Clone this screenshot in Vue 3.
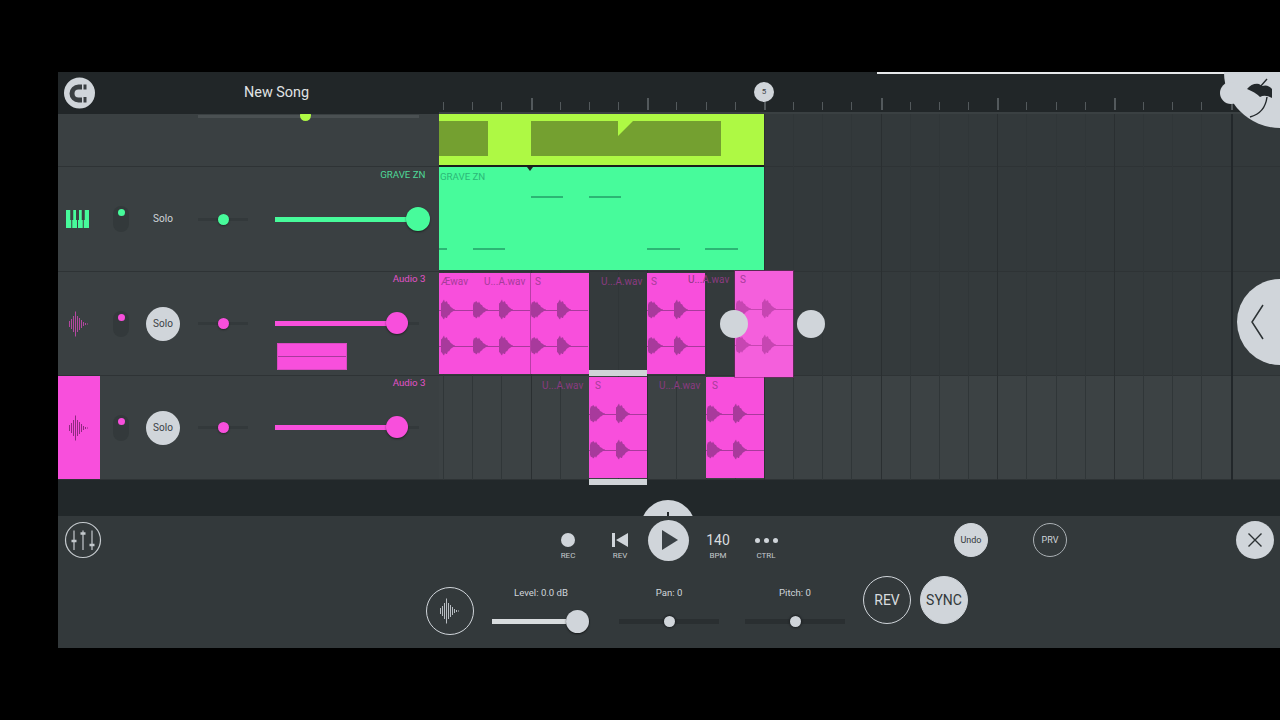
<script setup>
const BEAT = 29.17
const beats = Array.from({ length: 28 }, (_, n) => ({
  x: 4 + n * BEAT,
  bar: n % 4 === 3,
  edge: n === 27,
}))

function blob(x0, w, h, y, seed) {
  const top = []
  const bottom = []
  for (let i = 0; i <= w; i++) {
    const t = i / w
    let env
    if (t < 0.12) env = 0.55 + (t / 0.12) * 0.45
    else if (t < 0.45) env = 1 - (t - 0.12) * 0.6
    else env = 0.8 * Math.pow(1 - (t - 0.45) / 0.55, 1.7)
    const jitter = 0.86 + 0.14 * Math.sin(i * 2.3 + seed)
    const a = h * env * jitter + 0.6
    top.push(`${x0 + i} ${(y - a).toFixed(1)}`)
    bottom.unshift(`${x0 + i} ${(y + a * 0.92).toFixed(1)}`)
  }
  return `M${top.join(' L')} L${bottom.join(' L')}Z`
}
const tilePath = [37, 73]
  .map((y) => blob(1, 15, 9.5, y, 0) + blob(27, 14, 10.5, y, 1.4))
  .join('')

const iconBars = [[0, 3], [2, 5], [4, 8], [6, 12.5], [8, 8], [10, 6], [12, 4], [14, 2], [16, 1], [18, 0.5]]
const iconPath = iconBars.map(([x, h]) => `M${x + 1.5} ${18 - h}V${18 + h}`).join('')

const rows = [
  { id: 'g', h: 105, color: '#47fb9b', labelColor: '#4fd898', name: 'GRAVE ZN', icon: 'piano', solo: false, level: 143, labelTop: 2 },
  { id: 'p1', h: 104, color: '#f84fdc', labelColor: '#e252c8', name: 'Audio 3', icon: 'wave', solo: true, level: 122, labelTop: 1, ghost: true },
  { id: 'p2', h: 104, color: '#f84fdc', labelColor: '#e252c8', name: 'Audio 3', icon: 'wave', solo: true, level: 122, labelTop: 1, block: true },
]

const clips = [
  { x: 0, y: 159, w: 150, h: 101, tiles: [-25, 33, 91], divider: 91 },
  { x: 208, y: 159, w: 58, h: 101, tiles: [0] },
  { x: 150, y: 263, w: 58, h: 101, tiles: [0], selected: true },
  { x: 267, y: 263, w: 58, h: 101, tiles: [0] },
  { x: 296, y: 157, w: 58, h: 106, tiles: [0], ghost: true },
]

const labels = [
  { t: 'Æwav', x: 2, y: 168, on: true },
  { t: 'U...A.wav', x: 45, y: 168, on: true },
  { t: 'S', x: 96, y: 168, on: true },
  { t: 'U...A.wav', x: 162, y: 168 },
  { t: 'S', x: 212, y: 168, on: true },
  { t: 'U...A.wav', x: 249, y: 166 },
  { t: 'S', x: 301, y: 166, on: true },
  { t: 'U...A.wav', x: 103, y: 272 },
  { t: 'S', x: 156, y: 272, on: true },
  { t: 'U...A.wav', x: 220, y: 272 },
  { t: 'S', x: 273, y: 272, on: true },
]

const notes = [
  [92, 83, 32], [150, 83, 32], [0, 135, 8], [34, 135, 32], [208, 135, 33], [266, 135, 33],
]

const transport = [
  { id: 'rec', label: 'REC' },
  { id: 'rev', label: 'REV' },
  { id: 'play', label: '' },
  { id: 'bpm', label: 'BPM' },
  { id: 'ctrl', label: 'CTRL' },
]

const sliders = [
  { label: 'Level: 0.0 dB', w: 98, knob: 85, big: true, gap: 18 },
  { label: 'Pan: 0', w: 100, knob: 50, gap: 29 },
  { label: 'Pitch: 0', w: 100, knob: 50, gap: 26 },
]
</script>

<template>
  <div class="page">
    <div class="app">
      <header class="header">
        <div class="head-left">
          <svg class="snap" width="32" height="32" viewBox="0 0 32 32">
            <circle cx="15.5" cy="16" r="15.5" fill="#d0d5da" />
            <path d="M18 10H14.5a6.5 6.5 0 0 0 0 13H18" fill="none" stroke="#3a3f42" stroke-width="5" />
            <path d="M19.5 7.5H22.5V12.5H19.5ZM19.5 20H22.5V25.5H19.5Z" fill="#3a3f42" />
          </svg>
          <span class="song">New Song</span>
        </div>
        <div class="ruler">
          <i
            v-for="b in beats"
            :key="b.x"
            class="tick"
            :class="{ bar: b.bar }"
            :style="{ left: b.x + 'px' }"
          />
          <b class="marker">5</b>
          <span class="topline" />
        </div>
      </header>

      <div class="body">
        <div class="tracks">
          <div class="row first">
            <div class="scrub"><span class="scrub-knob" /></div>
          </div>
          <div v-for="r in rows" :key="r.id" class="row" :style="{ height: r.h + 'px' }">
            <span class="track-name" :style="{ color: r.labelColor, top: r.labelTop + 'px' }">{{ r.name }}</span>
            <div class="icon-cell" :style="r.block ? { background: r.color } : null">
              <svg v-if="r.icon === 'piano'" class="piano" width="23" height="18" viewBox="0 0 23 18">
                <rect x="0" y="0" width="23" height="18" :fill="r.color" />
                <path d="M5.75 0V18M11.5 0V18M17.25 0V18" stroke="#3a4042" stroke-width="1" />
                <path d="M5.75 0V10M11.5 0V10M17.25 0V10" stroke="#3a4042" stroke-width="3" />
              </svg>
              <svg v-else width="22" height="36" viewBox="0 0 22 36">
                <path :d="iconPath" fill="none" :stroke="r.block ? '#8f2a80' : '#b3479f'" stroke-width="1" />
              </svg>
            </div>
            <div class="toggle"><span :style="{ background: r.color }" /></div>
            <div class="solo" :class="{ on: r.solo }">Solo</div>
            <div class="pan"><span :style="{ background: r.color }" /></div>
            <div class="volume">
              <span class="vol-fill" :style="{ width: r.level + 'px', background: r.color }" />
              <span class="vol-knob" :class="{ large: r.id === 'g' }" :style="{ left: r.level + 'px', background: r.color }" />
            </div>
            <div v-if="r.ghost" class="drag-ghost" />
          </div>
        </div>

        <div class="timeline">
          <div class="lane lane-a" />
          <div class="lane lane-a tall" />
          <div class="lane lane-b" />
          <div class="lane lane-c" />
          <i
            v-for="b in beats"
            :key="b.x"
            class="grid"
            :class="{ bar: b.bar, edge: b.edge }"
            :style="{ left: b.x + 'px' }"
          />

          <div class="lime">
            <div class="lime-block" />
            <svg class="lime-notch" width="190" height="35" viewBox="0 0 190 35">
              <path d="M0 0H87V15L102 0H190V35H0Z" fill="#74a030" />
            </svg>
          </div>
          <div class="green">
            <span class="green-name">GRAVE ZN</span>
            <i class="playhead" />
            <i
              v-for="n in notes"
              :key="n[0] + '-' + n[1]"
              class="note"
              :style="{ left: n[0] + 'px', top: n[1] - 53 + 'px', width: n[2] + 'px' }"
            />
          </div>

          <template v-for="(c, i) in clips" :key="i">
            <div
              class="clip"
              :class="{ ghost: c.ghost }"
              :style="{ left: c.x + 'px', top: c.y + 'px', width: c.w + 'px', height: c.h + 'px' }"
            >
              <svg
                v-for="t in c.tiles"
                :key="t"
                class="tile"
                :style="{ left: t + 'px', top: (c.ghost ? 1 : 0) + 'px' }"
                width="58"
                height="100"
                viewBox="0 0 58 100"
              >
                <path :d="tilePath" :fill="c.ghost ? '#c646b2' : '#a83a9c'" />
                <path d="M0 37.5H58M0 73.5H58" :stroke="c.ghost ? '#c646b2' : '#a83a9c'" stroke-width="1" />
              </svg>
              <i v-if="c.divider" class="divider" :style="{ left: c.divider + 'px' }" />
            </div>
            <template v-if="c.selected">
              <i class="sel-bar" :style="{ left: c.x + 'px', top: c.y - 7 + 'px' }" />
              <i class="sel-bar" :style="{ left: c.x + 'px', top: c.y + c.h + 1 + 'px' }" />
            </template>
          </template>

          <span
            v-for="(l, i) in labels"
            :key="'l' + i"
            class="clip-label"
            :class="{ on: l.on }"
            :style="{ left: l.x + 'px', top: l.y - 6 + 'px' }"
          >{{ l.t }}</span>

          <i class="handle" style="left: 281px; top: 196px" />
          <i class="handle" style="left: 358px; top: 196px" />
        </div>
      </div>

      <div class="gap"><span class="arc"><i /></span></div>

      <div class="panel">
        <div class="panel-top">
          <svg class="mixer" width="38" height="38" viewBox="0 0 38 38" fill="none" stroke="#c4c9cd">
            <circle cx="19" cy="19" r="17.5" stroke-width="1.2" />
            <path d="M10 9.5V29M19 9.5V29M28 9.5V29" stroke-width="1.2" />
            <path d="M7.5 20H12.5M16.5 12.5H21.5M25.5 24H30.5" stroke-width="2.6" />
          </svg>
          <div class="transport">
            <div v-for="t in transport" :key="t.id" class="t-item">
              <div class="t-icon">
                <span v-if="t.id === 'rec'" class="rec-dot" />
                <svg v-else-if="t.id === 'rev'" width="18" height="16" viewBox="0 0 18 16">
                  <path d="M1 1H4V15H1ZM17 1V15L5 8Z" fill="#d0d5da" />
                </svg>
                <div v-else-if="t.id === 'play'" class="play">
                  <svg width="16" height="20" viewBox="0 0 16 20">
                    <path d="M0 0L16 10L0 20Z" fill="#3a4145" />
                  </svg>
                </div>
                <span v-else-if="t.id === 'bpm'" class="bpm">140</span>
                <span v-else class="dots"><i /><i /><i /></span>
              </div>
              <span class="t-label">{{ t.label }}</span>
            </div>
          </div>
          <button class="round undo">Undo</button>
          <button class="round prv">PRV</button>
          <button class="close" aria-label="Close">
            <svg width="16" height="16" viewBox="0 0 16 16">
              <path d="M1.5 1.5L14.5 14.5M14.5 1.5L1.5 14.5" stroke="#2c3234" stroke-width="1.4" />
            </svg>
          </button>
        </div>

        <div class="panel-bottom">
          <div class="wave-btn">
            <svg width="22" height="36" viewBox="0 0 22 36">
              <path :d="iconPath" fill="none" stroke="#b8bdc2" stroke-width="1" />
            </svg>
          </div>
          <div
            v-for="s in sliders"
            :key="s.label"
            class="param"
            :style="{ width: s.w + 'px', marginLeft: s.gap + 'px' }"
          >
            <span class="param-label">{{ s.label }}</span>
            <div class="param-track">
              <span v-if="s.big" class="param-fill" :style="{ width: s.knob - 11 + 'px' }" />
              <span class="param-knob" :class="{ big: s.big }" :style="{ left: s.knob + 'px' }" />
            </div>
          </div>
          <div class="big-round rev">REV</div>
          <div class="big-round sync">SYNC</div>
        </div>
      </div>

      <div class="arrow">
        <svg width="14" height="36" viewBox="0 0 14 36">
          <path d="M12 1L1 18L12 35" fill="none" stroke="#2c3234" stroke-width="1.5" />
        </svg>
      </div>
      <svg class="fruit" width="62" height="58" viewBox="0 0 62 58">
        <circle cx="62" cy="0" r="56" fill="#d0d5da" />
        <circle cx="13" cy="21" r="11" fill="#d0d5da" />
        <path
          d="M29 17Q34 11 41 12L44 14Q50 12 54 17V26Q47 22 42 25Q37 20 29 17Z"
          fill="#23282b"
        />
        <path d="M49 7L42 15" stroke="#23282b" stroke-width="1.4" fill="none" />
        <path d="M49 25Q47 41 32 45" stroke="#23282b" stroke-width="1.4" fill="none" />
      </svg>
    </div>
  </div>
</template>

<style scoped>
.page {
  width: 1280px;
  height: 720px;
  box-sizing: border-box;
  padding: 72px 0 72px 58px;
  background: #000;
  overflow: hidden;
  font-family: Roboto, "Liberation Sans", sans-serif;
}
.app {
  position: relative;
  height: 576px;
  display: flex;
  flex-direction: column;
  overflow: hidden;
}

/* header */
.header {
  height: 42px;
  flex: none;
  display: flex;
  background: #212628;
}
.head-left {
  width: 381px;
  flex: none;
  display: flex;
  align-items: center;
  padding: 0 0 1px 6px;
  box-sizing: border-box;
}
.snap { flex: none; }
.song {
  margin-left: 148px;
  font-size: 14.4px;
  color: #e0e3e5;
}
.ruler {
  position: relative;
  flex: 1;
  border-bottom: 2px solid #3a4042;
  box-sizing: border-box;
}
.tick {
  position: absolute;
  top: 30px;
  width: 1px;
  height: 8px;
  background: #53595c;
}
.tick.bar {
  width: 2px;
  height: 12px;
  top: 26px;
}
.marker {
  position: absolute;
  left: 315px;
  top: 10px;
  width: 20px;
  height: 20px;
  border-radius: 50%;
  background: #d0d5da;
  color: #3a4145;
  font-size: 8px;
  font-weight: 400;
  line-height: 20px;
  text-align: center;
}
.topline {
  position: absolute;
  left: 438px;
  top: 0;
  width: 350px;
  height: 2px;
  background: #e6e8ea;
}

/* track list */
.body {
  height: 366px;
  flex: none;
  display: flex;
}
.tracks {
  width: 381px;
  flex: none;
  background: #3a4042;
}
.row {
  position: relative;
  display: flex;
  align-items: center;
  box-sizing: border-box;
  border-bottom: 1px solid #2e3335;
}
.row.first {
  height: 53px;
  align-items: flex-start;
  overflow: hidden;
}
.scrub {
  position: relative;
  margin-left: 140px;
  width: 221px;
  height: 3px;
  margin-top: 1px;
  background: #4a5052;
}
.scrub-knob {
  position: absolute;
  left: 102px;
  top: -5px;
  width: 11px;
  height: 11px;
  border-radius: 50%;
  background: #aef944;
}
.track-name {
  position: absolute;
  right: 13.5px;
  font-size: 9.7px;
  line-height: 12px;
}
.icon-cell {
  width: 42px;
  height: 100%;
  flex: none;
  display: flex;
  align-items: center;
  justify-content: center;
}
.piano { margin-left: -3px; }
.toggle {
  width: 16px;
  height: 26px;
  margin-left: 13px;
  flex: none;
  border-radius: 8px;
  background: #33393b;
  display: flex;
  justify-content: center;
  padding-top: 3px;
  box-sizing: border-box;
}
.toggle span {
  width: 7px;
  height: 7px;
  border-radius: 50%;
}
.solo {
  width: 34px;
  height: 34px;
  margin-left: 17px;
  flex: none;
  border-radius: 50%;
  color: #d0d5da;
  font-size: 10px;
  line-height: 34px;
  text-align: center;
}
.solo.on {
  background: #d0d5da;
  color: #3a4145;
}
.pan {
  position: relative;
  width: 50px;
  height: 3px;
  margin-left: 18px;
  flex: none;
  background: #33393b;
}
.pan span {
  position: absolute;
  left: 20px;
  top: -4px;
  width: 11px;
  height: 11px;
  border-radius: 50%;
  box-shadow: 0 1px 2px rgba(0, 0, 0, 0.4);
}
.volume {
  position: relative;
  width: 144px;
  height: 5px;
  margin-left: 27px;
  flex: none;
  background: linear-gradient(#33393b, #33393b) no-repeat 0 1px / 100% 3px;
}
.vol-fill {
  position: absolute;
  left: 0;
  top: 0;
  height: 5px;
}
.vol-knob {
  position: absolute;
  top: -9px;
  width: 22px;
  height: 22px;
  margin-left: -11px;
  border-radius: 50%;
  box-shadow: 0 1px 2px rgba(0, 0, 0, 0.5);
}
.vol-knob.large {
  top: -10px;
  width: 24px;
  height: 24px;
  margin-left: -12px;
}
.drag-ghost {
  position: absolute;
  left: 219px;
  top: 71px;
  width: 70px;
  height: 27px;
  box-sizing: border-box;
  background: linear-gradient(#f84fdc 12px, #a83a9c 12px, #a83a9c 13px, #f84fdc 13px);
  border: 1px solid #d94ac2;
}

/* timeline */
.timeline {
  position: relative;
  z-index: 1;
  flex: 1;
}
.lane {
  box-sizing: border-box;
  border-bottom: 1px solid #2e3335;
}
.lane-a { height: 53px; background: #33393b; }
.lane-a.tall { height: 105px; }
.lane-b { height: 104px; background: #343a3c; }
.lane-c { height: 104px; background: #3c4244; }
.grid {
  position: absolute;
  top: 0;
  height: 366px;
  width: 1px;
  background: #303638;
}
.grid.bar { background: #2a2f31; }
.grid.edge { background: #22272a; width: 2px; }
.lime {
  position: absolute;
  left: 0;
  top: 0;
  width: 325px;
  height: 51px;
  background: #aef944;
  border-bottom: 2px solid #1a1d1c;
}
.lime-block {
  position: absolute;
  left: 0;
  top: 7px;
  width: 49px;
  height: 35px;
  background: #74a030;
}
.lime-notch {
  position: absolute;
  left: 92px;
  top: 7px;
}
.green {
  position: absolute;
  left: 0;
  top: 53px;
  width: 325px;
  height: 103px;
  background: #47fb9b;
}
.green-name {
  position: absolute;
  left: 1px;
  top: 4px;
  font-size: 9.7px;
  line-height: 12px;
  color: #2bb878;
}
.playhead {
  position: absolute;
  left: 88px;
  top: 0;
  width: 0;
  height: 0;
  border: 3px solid transparent;
  border-top: 4px solid #1f2423;
}
.note {
  position: absolute;
  height: 2px;
  margin-top: -1px;
  background: #2cb574;
}
.clip {
  position: absolute;
  overflow: hidden;
  background: #f84fdc;
}
.clip.ghost {
  background: #f45fdc;
  box-shadow: 0 0 0 1px rgba(130, 30, 110, 0.5);
}
.tile {
  position: absolute;
}
.divider {
  position: absolute;
  top: 0;
  bottom: 0;
  width: 1px;
  background: #b83ea6;
}
.sel-bar {
  position: absolute;
  width: 58px;
  height: 6px;
  background: #d0d4d8;
}
.clip-label {
  position: absolute;
  font-size: 10px;
  line-height: 12px;
  color: #8a3a80;
  white-space: nowrap;
}
.clip-label.on {
  color: #a63c9a;
}
.handle {
  position: absolute;
  width: 28px;
  height: 28px;
  border-radius: 50%;
  background: #d0d5da;
}

/* middle strip */
.gap {
  position: relative;
  height: 36px;
  flex: none;
  background: #22282a;
  overflow: hidden;
}
.arc {
  position: absolute;
  left: 583px;
  top: 20px;
  width: 54px;
  height: 54px;
  border-radius: 50%;
  background: #d0d5da;
}
.arc i {
  position: absolute;
  left: 26px;
  top: 12px;
  width: 2px;
  height: 5px;
  background: #23282b;
}

/* bottom panel */
.panel {
  height: 132px;
  flex: none;
  background: #33393b;
}
.panel-top {
  height: 48px;
  display: flex;
  align-items: center;
}
.mixer {
  margin-left: 6px;
  flex: none;
}
.transport {
  margin-left: 440px;
  height: 48px;
  flex: none;
  display: grid;
  grid-template-columns: 52px 52px 44px 56px 40px;
}
.t-item {
  display: flex;
  flex-direction: column;
  align-items: center;
  padding-top: 14px;
  box-sizing: border-box;
}
.t-icon {
  height: 20px;
  display: flex;
  align-items: center;
  justify-content: center;
}
.t-label {
  margin-top: 1px;
  font-size: 8px;
  line-height: 10px;
  color: #c4c9cd;
}
.rec-dot {
  width: 14px;
  height: 14px;
  border-radius: 50%;
  background: #d0d5da;
}
.play {
  width: 41px;
  height: 41px;
  flex: none;
  border-radius: 50%;
  background: #d0d5da;
  display: flex;
  align-items: center;
  justify-content: center;
  padding-left: 3px;
  box-sizing: border-box;
}
.bpm {
  font-size: 14px;
  color: #d8dcdf;
}
.dots {
  display: flex;
  gap: 4px;
}
.dots i {
  width: 5px;
  height: 5px;
  border-radius: 50%;
  background: #d0d5da;
}
.round {
  width: 34px;
  height: 34px;
  padding: 0;
  flex: none;
  border-radius: 50%;
  font: 9px Roboto, "Liberation Sans", sans-serif;
  line-height: 32px;
  text-align: center;
}
.undo {
  margin-left: 168px;
  background: #d0d5da;
  border: 1px solid #d0d5da;
  color: #33393b;
}
.prv {
  margin-left: 45px;
  background: transparent;
  border: 1px solid #aab0b4;
  color: #d0d5da;
}
.close {
  margin-left: 169px;
  width: 38px;
  height: 38px;
  padding: 0;
  flex: none;
  border: 0;
  border-radius: 50%;
  background: #d0d5da;
  display: flex;
  align-items: center;
  justify-content: center;
}
.panel-bottom {
  display: flex;
  align-items: flex-start;
}
.wave-btn {
  width: 48px;
  height: 48px;
  margin: 23px 0 0 368px;
  flex: none;
  box-sizing: border-box;
  border: 1.5px solid #d0d5da;
  border-radius: 50%;
  display: flex;
  align-items: center;
  justify-content: center;
}
.param {
  flex: none;
  padding-top: 23px;
  display: flex;
  flex-direction: column;
  align-items: center;
}
.param-label {
  font-size: 9.6px;
  line-height: 12px;
  color: #d0d5da;
}
.param-track {
  position: relative;
  width: 100%;
  height: 5px;
  margin-top: 19.5px;
  background: #2a2f31;
}
.param-fill {
  position: absolute;
  left: 0;
  top: 0;
  height: 5px;
  background: #d8dcde;
}
.param-knob {
  position: absolute;
  top: -3px;
  width: 11px;
  height: 11px;
  margin-left: -5.5px;
  border-radius: 50%;
  background: #d0d5da;
  box-shadow: 0 0 2px 1px #1d2123;
}
.param-knob.big {
  top: -9px;
  width: 23px;
  height: 23px;
  margin-left: -11.5px;
  box-shadow: 0 1px 2px rgba(0, 0, 0, 0.6);
}
.big-round {
  width: 48px;
  height: 48px;
  margin-top: 12px;
  flex: none;
  box-sizing: border-box;
  border-radius: 50%;
  font-size: 14px;
  line-height: 46px;
  text-align: center;
}
.rev {
  margin-left: 18px;
  border: 1.5px solid #d0d5da;
  color: #d8dcdf;
}
.sync {
  margin-left: 9px;
  background: #d0d5da;
  border: 1.5px solid #d0d5da;
  color: #33393b;
}
.arrow {
  position: absolute;
  z-index: 2;
  left: 1179px;
  top: 207px;
  width: 86px;
  height: 86px;
  border-radius: 50%;
  background: #d0d5da;
  display: flex;
  align-items: center;
  padding-left: 14px;
  box-sizing: border-box;
}
.fruit {
  position: absolute;
  z-index: 2;
  right: 0;
  top: 0;
}
</style>
